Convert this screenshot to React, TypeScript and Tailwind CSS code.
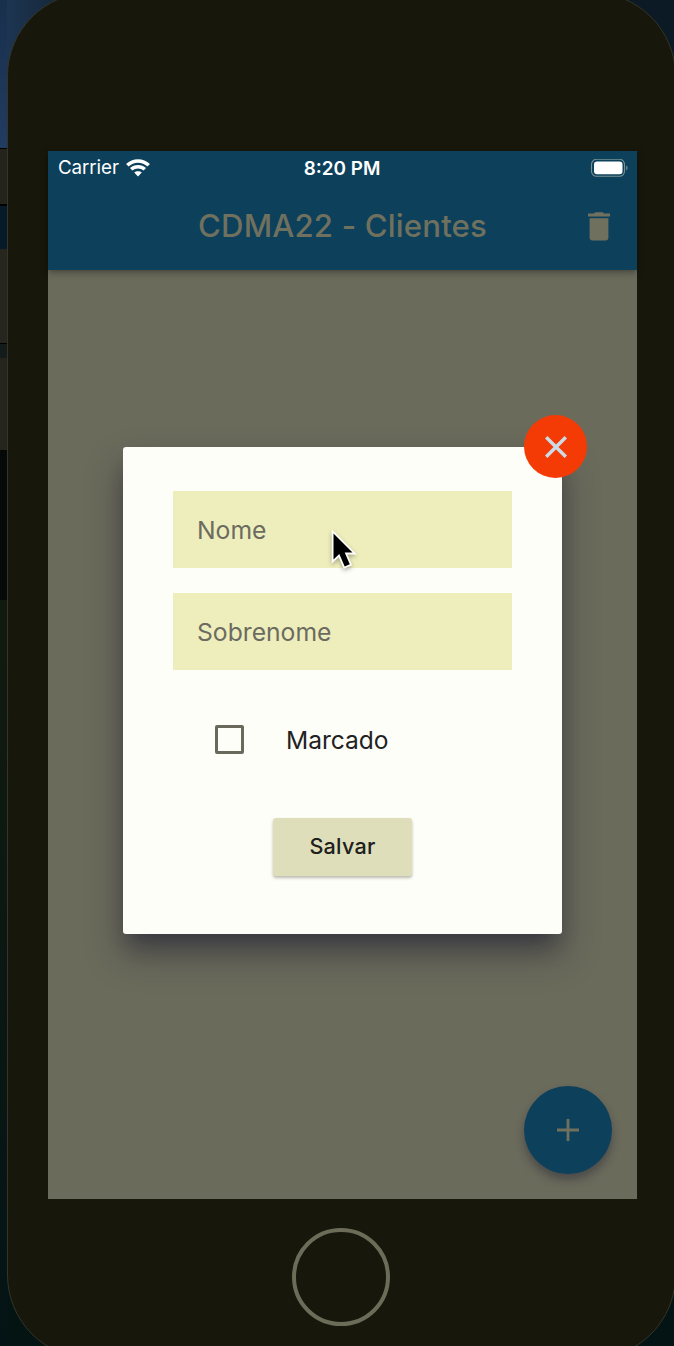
import React from "react";

function StatusBar() {
  return (
    <div className="grid h-8 grid-cols-3 items-center pl-[10px] pr-[9px] text-white">
      <div className="flex items-center gap-[7px] text-[18.8px] leading-8">
        <span className="w-[61px] whitespace-nowrap tracking-[-0.1px]">Carrier</span>
        <svg className="h-[18px] w-6 shrink-0" viewBox="0 0 24 18" fill="none" stroke="white" strokeWidth="3.6">
          <path d="M1.3 6.2C7.3.5 16.7.5 22.7 6.2" />
          <path d="M5.2 10.3C9 6.8 15 6.8 18.8 10.3" />
          <path d="M12 17.5 8.2 13.6C10.2 11.8 13.8 11.8 15.8 13.6Z" fill="white" stroke="none" />
        </svg>
      </div>
      <span className="whitespace-nowrap pr-[2px] pt-[2px] text-center text-[18.9px] font-semibold leading-8">8:20 PM</span>
      <svg className="h-[19px] w-[38px] justify-self-end" viewBox="0 0 38 19">
        <rect x="1.5" y=".3" width="33" height="17" rx="5" fill="none" stroke="#789397" strokeWidth="1.1" />
        <rect x="4" y="2.6" width="28.5" height="12.6" rx="3" fill="white" />
        <path d="M36.2 6.4v5c1.8-.8 1.8-4.2 0-5Z" fill="#789397" />
      </svg>
    </div>
  );
}

function AppBar() {
  return (
    <header className="relative h-[119px] shrink-0 bg-[#0d405b] shadow-[0_2px_7px_rgba(0,0,0,0.4)]">
      <StatusBar />
      <div className="grid h-[87px] grid-cols-[74px_1fr_74px] items-center">
        <h1 className="col-start-2 whitespace-nowrap text-center text-[31.2px] font-medium tracking-[0.15px] text-[#70705f]">
          CDMA22 - Clientes
        </h1>
        <svg className="mr-[2px] h-[29px] w-[22px] justify-self-center" viewBox="0 0 22 29" fill="#70705f">
          <path d="M0 1.6h6L7.3.2h7.4L16 1.6h6v3H0ZM1.6 6.2h18.8v19.6c0 1.7-1.2 2.8-2.8 2.8H4.4c-1.7 0-2.8-1.2-2.8-2.8Z" />
        </svg>
      </div>
    </header>
  );
}

function Field({ label }: { label: string }) {
  return (
    <div className="flex h-[77px] items-center bg-[#eeeebc] px-6 pt-[2px] text-[24.7px] text-[#6b6b60]">
      {label}
    </div>
  );
}

function ClientDialog() {
  return (
    <section className="relative mx-auto mt-[177px] h-[487px] w-[439px] rounded-[3px] bg-[#fefef9] px-[50px] pt-11 shadow-[0_20px_34px_2px_rgba(24,24,44,0.38),0_14px_20px_-8px_rgba(20,20,40,0.4)]">
      <button aria-label="Fechar" className="absolute -right-[25px] -top-[32px] flex size-[63px] items-center justify-center rounded-full bg-[#f43b06]">
        <svg className="size-[22px]" viewBox="0 0 22 22" fill="none" stroke="#cbdce6" strokeWidth="3.4">
          <path d="m1.2 1.2 19.6 19.6M20.8 1.2 1.2 20.8" />
        </svg>
      </button>
      <div className="flex flex-col gap-[25px]">
        <Field label="Nome" />
        <Field label="Sobrenome" />
      </div>
      <label className="mt-[55px] flex h-[29px] items-center pl-[42px] text-[24.6px] text-[#22221f]">
        <span className="size-[29px] shrink-0 rounded-[2px] border-[3px] border-[#69695c]" />
        <span className="ml-[42px] whitespace-nowrap pt-[2px] tracking-[-0.05px]">Marcado</span>
      </label>
      <button className="mx-auto mt-[64px] flex h-[58px] w-[139px] items-center justify-center rounded-[3px] bg-[#dedebb] pb-[2px] text-[21.6px] font-medium tracking-[0.25px] text-[#20201c] shadow-[0_2px_3px_rgba(60,60,40,0.35)]">
        Salvar
      </button>
      <svg className="absolute left-[206px] top-[82px] h-[44px] w-[30px] drop-shadow-[0_2px_2px_rgba(0,0,0,0.3)]" viewBox="0 0 30 44">
        <path d="M4.5 4.5v26l5.8-5.4 5.4 12.4 5.1-2.2-5.1-11.7h7.8Z" fill="black" stroke="white" strokeWidth="3.6" paintOrder="stroke" />
      </svg>
    </section>
  );
}

export default function App() {
  return (
    <main className="flex h-[1346px] w-[674px] overflow-hidden bg-[#06110e] font-[Inter,Roboto,sans-serif]">
      <div className="flex w-2 shrink-0 flex-col">
        <div className="h-[148px] bg-gradient-to-b from-[#192f4c] to-[#203c61]" />
        <div className="h-[56px] border-t border-black bg-[#24241d]" />
        <div className="h-[45px] border-t-2 border-black bg-[#071a29]" />
        <div className="h-[94px] bg-[#26261e]" />
        <div className="h-[15px] border-t border-black bg-[#141c1b]" />
        <div className="h-[92px] bg-[#25251e]" />
        <div className="h-[150px] bg-[#050908]" />
        <div className="flex-1 bg-gradient-to-b from-[#111a0e] to-[#041416]" />
      </div>
      <div className="relative -ml-px -mt-2 h-[1367px] w-[669px] shrink-0">
        <div className="absolute left-0 top-0 h-[92px] w-[92px] bg-gradient-to-r from-[#1d3552] to-[#101c27]" />
        <div className="absolute right-0 top-0 h-[92px] w-[92px] bg-[#0b1a25]" />
        <div className="absolute bottom-0 left-0 h-[92px] w-[92px] bg-[#041413]" />
        <div className="absolute bottom-0 right-0 h-[92px] w-[92px] bg-[#041314]" />
        <div className="relative flex h-full flex-col rounded-[84px] border border-[#34342a] bg-[#17170c] pl-10 pt-[158px]">
          <div className="relative h-[1048px] w-[589px] bg-[#6b6b5c]">
            <AppBar />
            <ClientDialog />
            <button aria-label="Adicionar" className="absolute bottom-[25px] right-[25px] flex size-[88px] items-center justify-center rounded-full bg-[#0d405b] shadow-[0_6px_10px_rgba(25,25,48,0.4)]">
              <svg className="size-[22px]" viewBox="0 0 22 22" fill="none" stroke="#70705f" strokeWidth="2.8">
                <path d="M11 0v22M0 11h22" />
              </svg>
            </button>
          </div>
          <div className="ml-[244px] mt-[29px] size-[98px] rounded-full border-[4px] border-[#6c6c59]" />
        </div>
      </div>
    </main>
  );
}
